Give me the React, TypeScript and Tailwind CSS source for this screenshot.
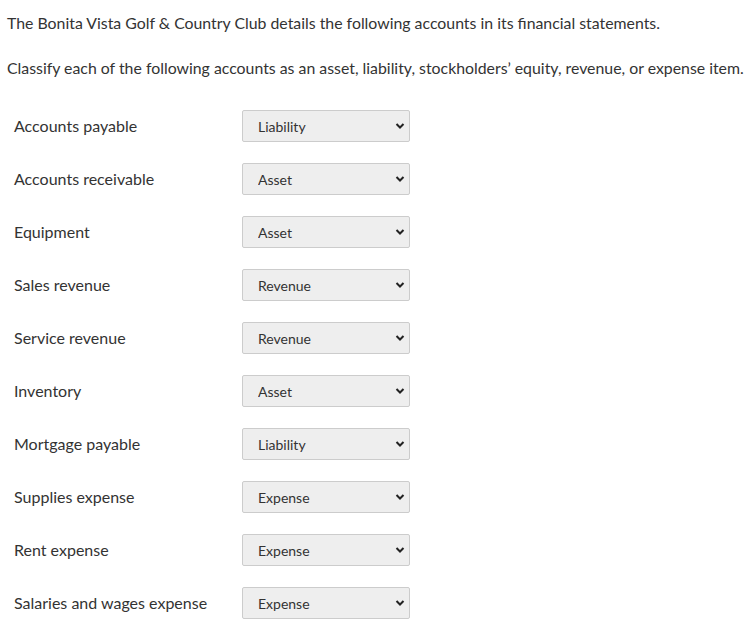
import React from "react";

const rows: [string, string][] = [
  ["Accounts payable", "Liability"],
  ["Accounts receivable", "Asset"],
  ["Equipment", "Asset"],
  ["Sales revenue", "Revenue"],
  ["Service revenue", "Revenue"],
  ["Inventory", "Asset"],
  ["Mortgage payable", "Liability"],
  ["Supplies expense", "Expense"],
  ["Rent expense", "Expense"],
  ["Salaries and wages expense", "Expense"],
];

const options = ["Asset", "Liability", "Stockholders’ equity", "Revenue", "Expense"];

export default function App() {
  return (
    <div className="bg-white text-[#333333] pl-[7px] pt-[13px]" style={{ fontFamily: "Lato, 'Open Sans', sans-serif" }}>
      <p className="text-[15.85px] leading-[20px] whitespace-nowrap">
        The Bonita Vista Golf &amp; Country Club details the following accounts in its financial statements.
      </p>
      <p className="text-[15.85px] leading-[20px] mt-[25px] whitespace-nowrap">
        Classify each of the following accounts as an asset, liability, stockholders’ equity, revenue, or expense item.
      </p>
      <div className="mt-[32px] flex flex-col gap-[21px] pl-[7px]">
        {rows.map(([label, value]) => (
          <div key={label} className="flex items-center h-[32px]">
            <div className="w-[228px] text-[16px]">{label}</div>
            <div className="relative w-[168px] h-[32px]">
              <select
                defaultValue={value}
                className="appearance-none w-full h-full bg-[#eeeeee] border border-[#cccccc] rounded-[2px] pl-[15px] text-[14px] text-[#333333] outline-none"
                style={{ fontFamily: "Lato, sans-serif" }}
              >
                {options.map((o) => (
                  <option key={o} value={o}>
                    {o}
                  </option>
                ))}
              </select>
              <svg
                className="absolute right-[5px] top-[12px] pointer-events-none"
                width="10"
                height="8"
                viewBox="0 0 10 8"
              >
                <path d="M1.5 2 L5 5.5 L8.5 2" fill="none" stroke="#222" strokeWidth="2" />
              </svg>
            </div>
          </div>
        ))}
      </div>
    </div>
  );
}
